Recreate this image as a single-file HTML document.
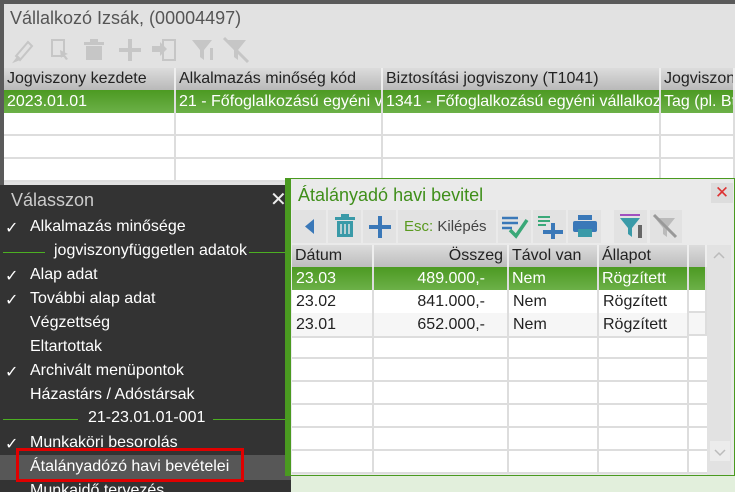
<!DOCTYPE html><html><head><meta charset="utf-8"><style>
*{margin:0;padding:0;box-sizing:border-box}
html,body{width:735px;height:492px;overflow:hidden}
body{background:#5a5a5a;font-family:"Liberation Sans",sans-serif;position:relative}
.abs{position:absolute}
.win{left:4px;top:4px;width:731px;height:181px;background:#e2e2e2}
.t{white-space:nowrap;overflow:hidden}
.hdr{background:linear-gradient(#dcdcdc,#b9b9b9);color:#222;font-size:16px;line-height:22px;padding-left:3px;border-right:2px solid #eee}
.grn{background:linear-gradient(#4c9a22,#6cb048);color:#fff;font-size:16px;line-height:23px;padding-left:3px;border-right:2px solid #ddd}
.cell{background:#fff;border-right:2px solid #ddd;border-bottom:2px solid #ddd}
.menu{left:0;top:185px;width:292px;height:307px;background:#333}
.mi{color:#fff;font-size:16px;left:30px;position:absolute;white-space:nowrap}
.ck{color:#fff;font-size:16px;left:5px;position:absolute}
.sep{position:absolute;height:1px;background:#4caf22}
.dlg{left:285px;top:178px;width:450px;height:298px;background:#eaeaea;border:1px solid #4a9a20;border-left:6px solid #4a9a20}
.btn{position:absolute;top:31px;height:33px;background:#e2e2e2}
.dh{background:linear-gradient(#dcdcdc,#bdbdbd);font-size:16px;line-height:22px;color:#222;padding-left:3px;border-right:2px solid #eee}
.dr{font-size:16px;line-height:23px;color:#222;padding-left:4px;border-right:2px solid #ddd;border-bottom:2px solid #ddd;background:#fff}
.grn.d{font-size:16px}
</style></head><body>
<div class="abs win">
 <div class="abs t" style="left:6px;top:4px;font-size:18px;color:#555">Vállalkozó Izsák, (00004497)</div>
 <svg class="abs" style="left:6px;top:30px" width="260" height="30" viewBox="0 0 260 30" fill="#c6c6c6">
  <path d="M6 22 L18 8 L22 12 L10 26 Z M5 27 l3-4 2 2z" stroke="#c6c6c6" stroke-width="2" fill="none"/>
  <rect x="42" y="6" width="12" height="16" fill="none" stroke="#c6c6c6" stroke-width="2"/><path d="M50 16 l8 4-3 1 3 4-2 1-3-4-2 2z"/>
  <rect x="74" y="8" width="20" height="3"/><rect x="80" y="5" width="8" height="3"/><rect x="76" y="12" width="16" height="14"/>
  <rect x="109" y="14" width="22" height="4"/><rect x="118" y="5" width="4" height="22"/>
  <path d="M142 12 h8 v-4 l7 7 -7 7 v-4 h-8z"/><rect x="153" y="6" width="12" height="20" fill="none" stroke="#c6c6c6" stroke-width="2"/>
  <path d="M182 6 h20 l-8 10 v10 l-4-3 v-7z"/><rect x="200" y="14" width="3" height="12"/>
  <path d="M216 6 h20 l-8 10 v10 l-4-3 v-7z"/><path d="M214 4 l24 24" stroke="#c6c6c6" stroke-width="3"/>
 </svg>
 <div class="abs t hdr" style="left:0;top:64px;width:172px">Jogviszony kezdete</div>
 <div class="abs t hdr" style="left:172px;top:64px;width:207px">Alkalmazás minőség kód</div>
 <div class="abs t hdr" style="left:379px;top:64px;width:278px">Biztosítási jogviszony (T1041)</div>
 <div class="abs t hdr" style="left:657px;top:64px;width:74px">Jogviszony</div>
 <div class="abs t grn" style="left:0;top:86px;width:172px">2023.01.01</div>
 <div class="abs t grn" style="left:172px;top:86px;width:207px">21 - Főfoglalkozású egyéni v</div>
 <div class="abs t grn" style="left:379px;top:86px;width:278px">1341 - Főfoglalkozású egyéni vállalkozó</div>
 <div class="abs t grn" style="left:657px;top:86px;width:74px">Tag (pl. Bt</div>
 <div class="abs cell" style="left:0;top:109px;width:172px;height:23px"></div><div class="abs cell" style="left:172px;top:109px;width:207px;height:23px"></div><div class="abs cell" style="left:379px;top:109px;width:278px;height:23px"></div><div class="abs cell" style="left:657px;top:109px;width:74px;height:23px"></div>
 <div class="abs cell" style="left:0;top:132px;width:172px;height:23px"></div><div class="abs cell" style="left:172px;top:132px;width:207px;height:23px"></div><div class="abs cell" style="left:379px;top:132px;width:278px;height:23px"></div><div class="abs cell" style="left:657px;top:132px;width:74px;height:23px"></div>
 <div class="abs cell" style="left:0;top:155px;width:172px;height:23px"></div><div class="abs cell" style="left:172px;top:155px;width:207px;height:23px"></div><div class="abs cell" style="left:379px;top:155px;width:278px;height:23px"></div><div class="abs cell" style="left:657px;top:155px;width:74px;height:23px"></div>
</div>
<div class="abs menu">
 <div class="abs" style="left:11px;top:5px;font-size:18px;color:#ccc">Válasszon</div>
 <div class="abs" style="left:270px;top:2px;font-size:20px;color:#eee">✕</div>
 <div class="ck" style="top:33px">✓</div><div class="mi" style="top:33px">Alkalmazás minősége</div>
 <div class="sep" style="left:3px;width:42px;top:67px"></div><div class="mi" style="left:54px;top:57px">jogviszonyfüggetlen adatok</div><div class="sep" style="left:249px;width:40px;top:67px"></div>
 <div class="ck" style="top:81px">✓</div><div class="mi" style="top:81px">Alap adat</div>
 <div class="ck" style="top:105px">✓</div><div class="mi" style="top:105px">További alap adat</div>
 <div class="mi" style="top:129px">Végzettség</div>
 <div class="mi" style="top:153px">Eltartottak</div>
 <div class="ck" style="top:177px">✓</div><div class="mi" style="top:177px">Archivált menüpontok</div>
 <div class="mi" style="top:201px">Házastárs / Adóstársak</div>
 <div class="sep" style="left:3px;width:75px;top:234px"></div><div class="mi" style="left:88px;top:224px">21-23.01.01-001</div><div class="sep" style="left:213px;width:76px;top:234px"></div>
 <div class="ck" style="top:249px">✓</div><div class="mi" style="top:249px">Munkaköri besorolás</div>
 <div class="abs" style="left:0;top:270px;width:292px;height:25px;background:#575757"></div>
 <div class="mi" style="top:273px">Átalányadózó havi bevételei</div>
 <div class="abs" style="left:16px;top:263px;width:228px;height:34px;border:3px solid #e00000"></div>
 <div class="mi" style="top:297px">Munkaidő tervezés</div>
</div>
<div class="abs" style="left:291px;top:476px;width:444px;height:16px;background:#e2efdc"></div>
<div class="abs dlg">
 <div class="abs" style="left:7px;top:6px;font-size:18px;color:#3f8f1a">Átalányadó havi bevitel</div>
 <div class="abs" style="left:420px;top:4px;width:22px;height:20px;background:#ddd;color:#d33;font-size:17px;text-align:center;line-height:20px">✕</div>
 <div class="btn" style="left:1px;width:34px"><svg width="34" height="33"><path d="M22 9 L13 16.5 22 24z" fill="#3a78b8"/></svg></div>
 <div class="btn" style="left:37px;width:33px"><svg width="33" height="33"><rect x="7" y="7" width="20" height="3" fill="#3a9aa8"/><rect x="13" y="4" width="8" height="3" fill="#3a9aa8"/><rect x="9" y="11" width="16" height="16" fill="#3a9aa8"/><path d="M13 14v10M17 14v10M21 14v10" stroke="#e2e2e2" stroke-width="1.5"/></svg></div>
 <div class="btn" style="left:72px;width:33px"><svg width="33" height="33"><path d="M6 17h22M17 6v22" stroke="#3a78b8" stroke-width="4"/></svg></div>
 <div class="btn" style="left:107px;width:98px;font-size:15px;line-height:33px;padding-left:6px;color:#444"><span style="color:#5a9a20">Esc:</span> Kilépés</div>
 <div class="btn" style="left:207px;width:33px"><svg width="33" height="33"><path d="M4 8h16M4 13h16M4 18h10" stroke="#3a78b8" stroke-width="2.5"/><path d="M12 20l6 6 11-16" stroke="#3aa878" stroke-width="3.5" fill="none"/></svg></div>
 <div class="btn" style="left:242px;width:33px"><svg width="33" height="33"><path d="M5 7h12M5 11h12M5 15h8" stroke="#3aa878" stroke-width="2"/><path d="M10 22h20M20 13v16" stroke="#3a78b8" stroke-width="4"/></svg></div>
 <div class="btn" style="left:277px;width:33px"><svg width="33" height="33"><rect x="10" y="5" width="14" height="5" fill="#3a78b8"/><rect x="5" y="11" width="24" height="11" rx="2" fill="#3a78b8"/><rect x="10" y="19" width="14" height="8" fill="#3a9aa8"/></svg></div>
 <div class="btn" style="left:323px;width:33px"><svg width="33" height="33"><path d="M6 5h20" stroke="#a050c0" stroke-width="2"/><path d="M6 8h20l-8 10v9l-4-3v-6z" fill="#3a9aa8"/><rect x="24" y="15" width="4" height="13" fill="#666"/></svg></div>
 <div class="btn" style="left:359px;width:32px"><svg width="32" height="33"><path d="M5 8h20l-8 10v9l-4-3v-6z" fill="#bbb"/><path d="M4 5l22 22" stroke="#999" stroke-width="3"/></svg></div>
 <div class="abs" style="left:416px;top:66px;width:24px;height:230px;background:#e2e2e2"></div>
 <svg class="abs" style="left:419px;top:70px" width="18" height="14"><path d="M4 9l5-5 5 5" stroke="#bbb" stroke-width="1.5" fill="none"/></svg>
 <div class="abs" style="left:419px;top:262px;width:20px;height:20px;background:#ececec"></div>
 <svg class="abs" style="left:420px;top:266px" width="18" height="14"><path d="M4 5l5 5 5-5" stroke="#bbb" stroke-width="1.5" fill="none"/></svg>
 <div class="abs" style="left:1px;top:157px;width:415px;height:138px;background:#fff;
  background-image:linear-gradient(#ddd,#ddd),linear-gradient(#ddd,#ddd),linear-gradient(#ddd,#ddd),linear-gradient(#ddd,#ddd),repeating-linear-gradient(to bottom,transparent 0 21px,#ddd 21px 23px);
  background-size:2px 100%,2px 100%,2px 100%,2px 100%,100% 100%;background-position:80px 0,215px 0,305px 0,395px 0,0 0;background-repeat:no-repeat"></div>
 <div class="abs t dh" style="left:1px;top:66px;width:82px">Dátum</div>
 <div class="abs t dh" style="left:83px;top:66px;width:135px;text-align:right;padding-right:4px">Összeg</div>
 <div class="abs t dh" style="left:218px;top:66px;width:90px">Távol van</div>
 <div class="abs t dh" style="left:308px;top:66px;width:90px">Állapot</div>
 <div class="abs dh" style="left:398px;top:66px;width:18px;height:22px"></div>
 <div class="abs t grn" style="left:1px;top:88px;width:82px;padding-left:4px">23.03</div>
 <div class="abs t grn" style="left:83px;top:88px;width:135px;text-align:right;padding-right:22px">489.000,-</div>
 <div class="abs t grn" style="left:218px;top:88px;width:90px">Nem</div>
 <div class="abs t grn" style="left:308px;top:88px;width:90px">Rögzített</div>
 <div class="abs grn" style="left:398px;top:88px;width:18px;height:23px"></div>
 <div class="abs t dr" style="left:1px;top:111px;width:82px">23.02</div><div class="abs t dr" style="left:83px;top:111px;width:135px;text-align:right;padding-right:22px">841.000,-</div><div class="abs t dr" style="left:218px;top:111px;width:90px">Nem</div><div class="abs t dr" style="left:308px;top:111px;width:90px">Rögzített</div><div class="abs dr" style="left:398px;top:111px;width:18px;height:23px"></div>
 <div class="abs t dr" style="left:1px;top:134px;width:82px;background:#f6f6f6">23.01</div><div class="abs t dr" style="left:83px;top:134px;width:135px;text-align:right;padding-right:22px;background:#f6f6f6">652.000,-</div><div class="abs t dr" style="left:218px;top:134px;width:90px;background:#f6f6f6">Nem</div><div class="abs t dr" style="left:308px;top:134px;width:90px;background:#f6f6f6">Rögzített</div><div class="abs dr" style="left:398px;top:134px;width:18px;height:23px;background:#f6f6f6"></div>
</div>
</body></html>
